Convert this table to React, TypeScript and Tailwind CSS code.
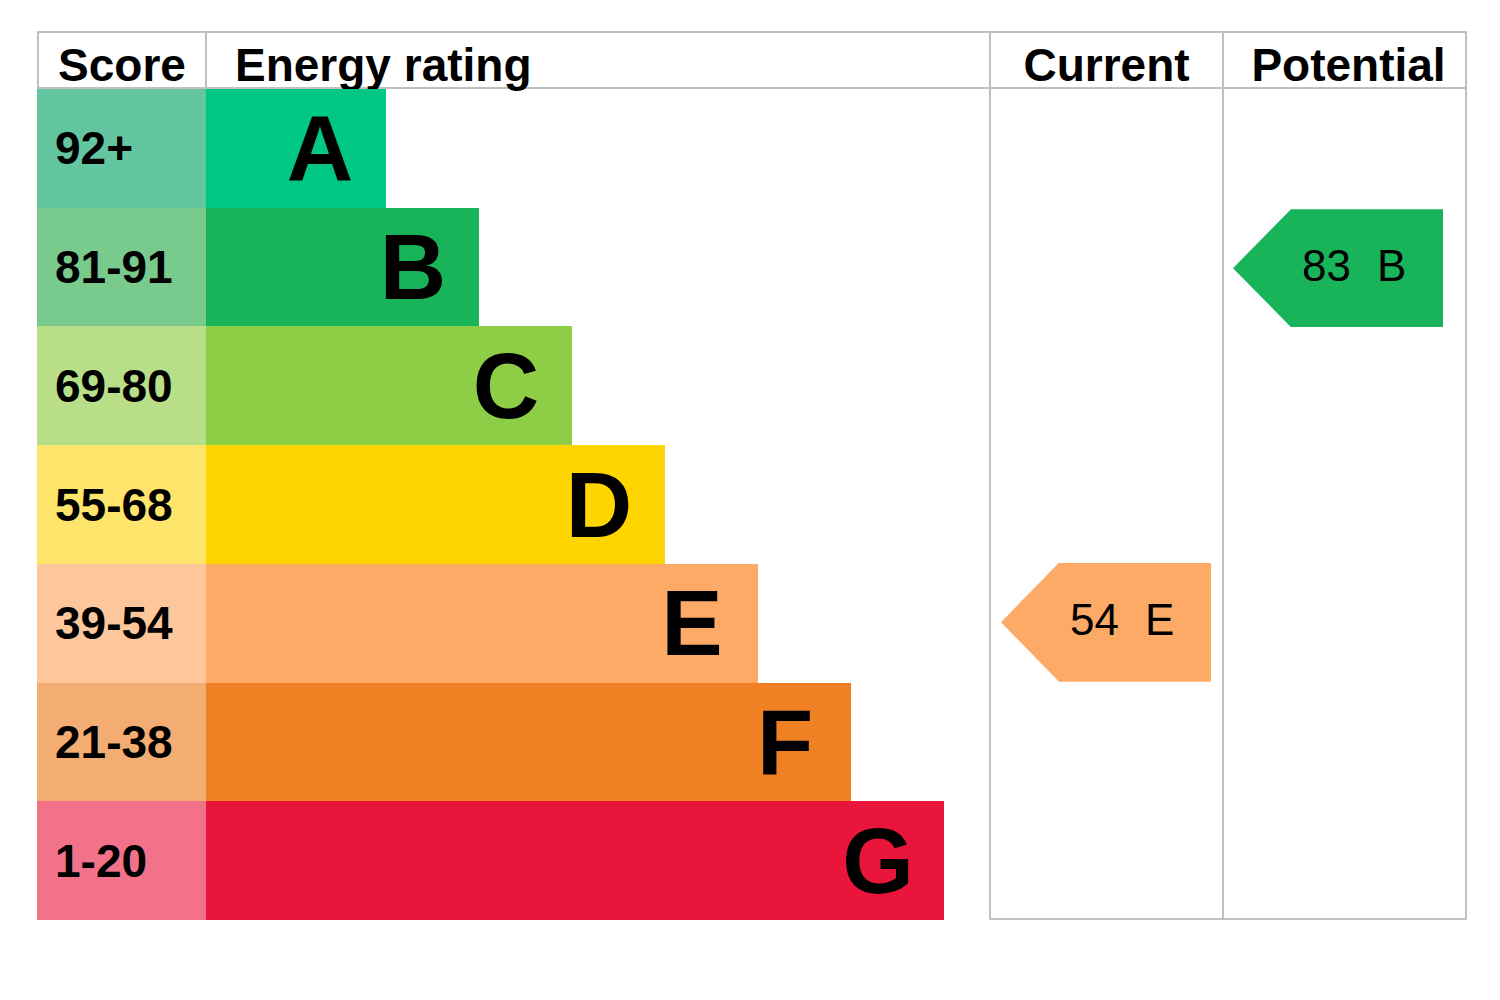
const bands = [
  { score: '92+', letter: 'A', cell: 'bg-[#64c6a0]', bar: 'bg-[#00c781]', width: 'w-[180px]' },
  { score: '81-91', letter: 'B', cell: 'bg-[#78cb8d]', bar: 'bg-[#19b459]', width: 'w-[273px]' },
  { score: '69-80', letter: 'C', cell: 'bg-[#b8df88]', bar: 'bg-[#8dce46]', width: 'w-[366px]' },
  { score: '55-68', letter: 'D', cell: 'bg-[#fee46a]', bar: 'bg-[#ffd500]', width: 'w-[459px]' },
  { score: '39-54', letter: 'E', cell: 'bg-[#fdc79b]', bar: 'bg-[#fcaa65]', width: 'w-[552px]' },
  { score: '21-38', letter: 'F', cell: 'bg-[#f3ac71]', bar: 'bg-[#ef8023]', width: 'w-[645px]' },
  { score: '1-20', letter: 'G', cell: 'bg-[#f2728a]', bar: 'bg-[#e9153b]', width: 'w-[738px]' }
]

const font = { fontFamily: '"Liberation Sans", Arial, sans-serif' }

function Arrow({ value, letter, color, className }: { value: string; letter: string; color: string; className: string }) {
  return (
    <div
      className={`flex w-[210px] items-center pb-[4px] pl-[69px] text-[44px] leading-none text-black [clip-path:polygon(0_50%,58px_0,100%_0,100%_100%,58px_100%)] ${color} ${className}`}
    >
      <span>{value}</span>
      <span className="ml-[26px]">{letter}</span>
    </div>
  )
}

function RatingColumn({ index, arrow, className }: { index: number; arrow: React.ReactNode; className: string }) {
  return (
    <div className={`flex h-[831px] flex-col border-b-2 border-l-2 border-[#c0c0c0] ${className}`}>
      {bands.map((b, i) => (
        <div key={b.letter} className="flex flex-1 items-start">
          {i === index ? arrow : null}
        </div>
      ))}
    </div>
  )
}

export default function App() {
  return (
    <div className="min-h-screen bg-white pl-[37px] pt-[31px] text-black" style={font}>
      <div className="w-[1430px]">
        <div className="grid grid-cols-[168px_784px_233px_245px] text-[46px] font-bold leading-none">
          <div className="flex h-[58px] items-center justify-center border-y-2 border-l-2 border-[#c0c0c0] pt-[10px]">Score</div>
          <div className="flex h-[58px] items-center border-y-2 border-l-2 border-[#c0c0c0] pl-[28px] pt-[10px]">Energy rating</div>
          <div className="flex h-[58px] items-center justify-center border-y-2 border-l-2 border-[#c0c0c0] pt-[10px]">Current</div>
          <div className="flex h-[58px] items-center justify-center border-2 border-[#c0c0c0] pl-[8px] pt-[10px]">Potential</div>
        </div>

        <div className="grid grid-cols-[952px_233px_245px]">
          <div className="flex h-[831px] flex-col">
            {bands.map((b) => (
              <div key={b.letter} className="flex flex-1">
                <div className={`flex w-[169px] items-center pl-[18px] text-[46px] font-bold leading-none ${b.cell}`}>
                  {b.score}
                </div>
                <div className={`flex items-center justify-end ${b.width} ${b.bar}`}>
                  <span className="w-[132px] text-center text-[92px] font-bold leading-none">{b.letter}</span>
                </div>
              </div>
            ))}
          </div>

          <RatingColumn
            index={4}
            className=""
            arrow={<Arrow value="54" letter="E" color="bg-[#fcaa65]" className="ml-[10px] mt-[1px] h-[119px]" />}
          />
          <RatingColumn
            index={1}
            className="border-r-2"
            arrow={<Arrow value="83" letter="B" color="bg-[#19b459]" className="ml-[9px] mt-[2px] h-[118px]" />}
          />
        </div>
      </div>
    </div>
  )
}
